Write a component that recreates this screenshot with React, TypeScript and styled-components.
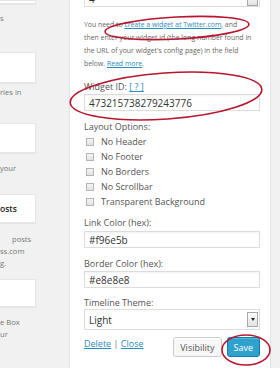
import React from "react";
import styled, { createGlobalStyle } from "styled-components";

const Global = createGlobalStyle`
  html, body { margin: 0; padding: 0; background: #f1f1f1; }
  body { font-family: "Open Sans", "Liberation Sans", sans-serif; }
  * { box-sizing: border-box; }
`;

const Page = styled.div`
  position: relative;
  display: flex;
  width: 280px;
  height: 368px;
  overflow: hidden;
  background: #f1f1f1;
`;

const Sidebar = styled.div`
  width: 69px;
  flex: none;
  display: flex;
  flex-direction: column;
  background: #f1f1f1;
`;

const WidgetBox = styled.div<{ $h: number; $mt: number }>`
  width: 36px;
  height: ${(p) => p.$h}px;
  margin-top: ${(p) => p.$mt}px;
  background: #fff;
  border: 1px solid #e6e6e6;
  border-left: none;
  box-shadow: 0 1px 1px rgba(0, 0, 0, 0.05);
  display: flex;
  align-items: center;
  overflow: hidden;
  font-size: 8.5px;
  font-weight: 600;
  color: #222;
  white-space: nowrap;
`;

const Desc = styled.div<{ $mt: number }>`
  margin-top: ${(p) => p.$mt}px;
  font-size: 7.6px;
  line-height: 12px;
  color: #777;
  white-space: nowrap;
`;

const DescLine = styled.div<{ $indent?: number }>`
  padding-left: ${(p) => p.$indent ?? 0}px;
`;

const Panel = styled.div`
  width: 202px;
  flex: none;
  background: #fff;
  border-left: 1px solid #e2e2e2;
  border-right: 1px solid #e2e2e2;
  padding: 0 10px 0 14px;
  display: flex;
  flex-direction: column;
`;

const Filler = styled.div`
  flex: 1;
  background: #f1f1f1;
`;

const SelectBox = styled.div<{ $h: number; $mt?: number }>`
  height: ${(p) => p.$h}px;
  margin-top: ${(p) => p.$mt ?? 0}px;
  border: 1px solid #dcdcdc;
  background: #fff;
  display: flex;
  align-items: center;
  justify-content: space-between;
  padding: 0 1px 0 4px;
  font-size: 10px;
  color: #333;
`;

const ArrowBox = styled.span`
  width: 11px;
  height: 15px;
  border: 1px solid #a8a8a8;
  background: linear-gradient(#ffffff, #e2e2e2);
  display: flex;
  align-items: center;
  justify-content: center;
  &::after {
    content: "";
    border-left: 2.5px solid transparent;
    border-right: 2.5px solid transparent;
    border-top: 3px solid #222;
  }
`;

const Help = styled.p`
  margin: 11px 0 0;
  font-size: 6.9px;
  line-height: 13px;
  color: #666;
  white-space: nowrap;
`;

const Link = styled.a`
  color: #2a8bbd;
  text-decoration: underline;
`;

const Label = styled.div<{ $mt: number }>`
  margin-top: ${(p) => p.$mt}px;
  font-size: 9px;
  line-height: 12px;
  color: #555;
  white-space: nowrap;
`;

const TextInput = styled.div<{ $mt: number }>`
  margin-top: ${(p) => p.$mt}px;
  height: 17px;
  border: 1px solid #dcdcdc;
  box-shadow: inset 0 1px 2px rgba(0, 0, 0, 0.05);
  background: #fff;
  display: flex;
  align-items: center;
  padding-left: 4px;
  font-size: 10px;
  color: #333;
`;

const CheckRow = styled.label`
  height: 15px;
  display: flex;
  align-items: center;
  gap: 7px;
  padding-left: 2px;
  font-size: 9px;
  color: #555;
`;

const CheckBox = styled.span`
  width: 8px;
  height: 8px;
  border: 1px solid #b4b4b4;
  background: linear-gradient(#f4f4f4, #e2e2e2);
  flex: none;
`;

const Checks = styled.div`
  margin-top: 1px;
  display: flex;
  flex-direction: column;
`;

const Footer = styled.div`
  margin-top: 7px;
  display: flex;
  justify-content: space-between;
  align-items: flex-start;
`;

const FooterLinks = styled.div`
  padding-top: 1px;
  font-size: 9px;
  line-height: 12px;
  color: #777;
`;

const Buttons = styled.div`
  display: flex;
  gap: 5px;
  align-items: center;
`;

const Button = styled.button<{ $primary?: boolean }>`
  height: 20px;
  padding: 0 6px;
  border-radius: 3px;
  font-family: "Open Sans", "Liberation Sans", sans-serif;
  font-size: 9px;
  border: 1px solid ${(p) => (p.$primary ? "#0d7eb0" : "#cccccc")};
  background: ${(p) => (p.$primary ? "#2ea2cc" : "#f7f7f7")};
  color: ${(p) => (p.$primary ? "#fff" : "#555")};
  box-shadow: ${(p) => (p.$primary ? "inset 0 1px 0 rgba(120,200,230,.5)" : "inset 0 1px 0 #fff")};
`;

const Marks = styled.svg`
  position: absolute;
  left: 0;
  top: 0;
  pointer-events: none;
`;

export default function App() {
  return (
    <>
      <Global />
      <Page>
        <Sidebar>
          <WidgetBox $h={4} $mt={0} />
          <Desc $mt={8}>
            <DescLine>s</DescLine>
          </Desc>
          <WidgetBox $h={31} $mt={28} />
          <Desc $mt={3}>
            <DescLine>ries in</DescLine>
          </Desc>
          <WidgetBox $h={30} $mt={25} />
          <Desc $mt={9}>
            <DescLine>your</DescLine>
          </Desc>
          <WidgetBox $h={29} $mt={20}>osts</WidgetBox>
          <Desc $mt={10}>
            <DescLine $indent={12}>posts</DescLine>
            <DescLine>ss.com</DescLine>
            <DescLine>g.</DescLine>
          </Desc>
          <WidgetBox $h={28} $mt={10} />
          <Desc $mt={9}>
            <DescLine>e Box</DescLine>
            <DescLine>ur</DescLine>
          </Desc>
        </Sidebar>
        <Panel>
          <SelectBox $h={17} $mt={-10}>
            4
            <ArrowBox />
          </SelectBox>
          <Help>
            You need to <Link>create a widget at Twitter.com</Link>, and
            <br />
            then enter your widget id (the long number found in
            <br />
            the URL of your widget's config page) in the field
            <br />
            below. <Link>Read more</Link>.
          </Help>
          <Label $mt={11}>
            Widget ID: <Link>[ ? ]</Link>
          </Label>
          <TextInput $mt={1}>473215738279243776</TextInput>
          <Label $mt={10}>Layout Options:</Label>
          <Checks>
            {["No Header", "No Footer", "No Borders", "No Scrollbar", "Transparent Background"].map((t) => (
              <CheckRow key={t}>
                <CheckBox />
                {t}
              </CheckRow>
            ))}
          </Checks>
          <Label $mt={8}>Link Color (hex):</Label>
          <TextInput $mt={2}>#f96e5b</TextInput>
          <Label $mt={10}>Border Color (hex):</Label>
          <TextInput $mt={1}>#e8e8e8</TextInput>
          <Label $mt={9}>Timeline Theme:</Label>
          <SelectBox $h={21}>
            Light
            <ArrowBox />
          </SelectBox>
          <Footer>
            <FooterLinks>
              <Link>Delete</Link> | <Link>Close</Link>
            </FooterLinks>
            <Buttons>
              <Button>Visibility</Button>
              <Button $primary>Save</Button>
            </Buttons>
          </Footer>
        </Panel>
        <Filler />
        <Marks width="280" height="368" viewBox="0 0 280 368">
          <g fill="none" stroke="#b8152e" strokeWidth="1.6">
            <ellipse cx="177" cy="28" rx="72" ry="11" transform="rotate(-3 177 28)" />
            <ellipse cx="166" cy="96" rx="96" ry="23" transform="rotate(-4 166 96)" />
            <ellipse cx="246" cy="350" rx="24" ry="15" />
          </g>
        </Marks>
      </Page>
    </>
  );
}
